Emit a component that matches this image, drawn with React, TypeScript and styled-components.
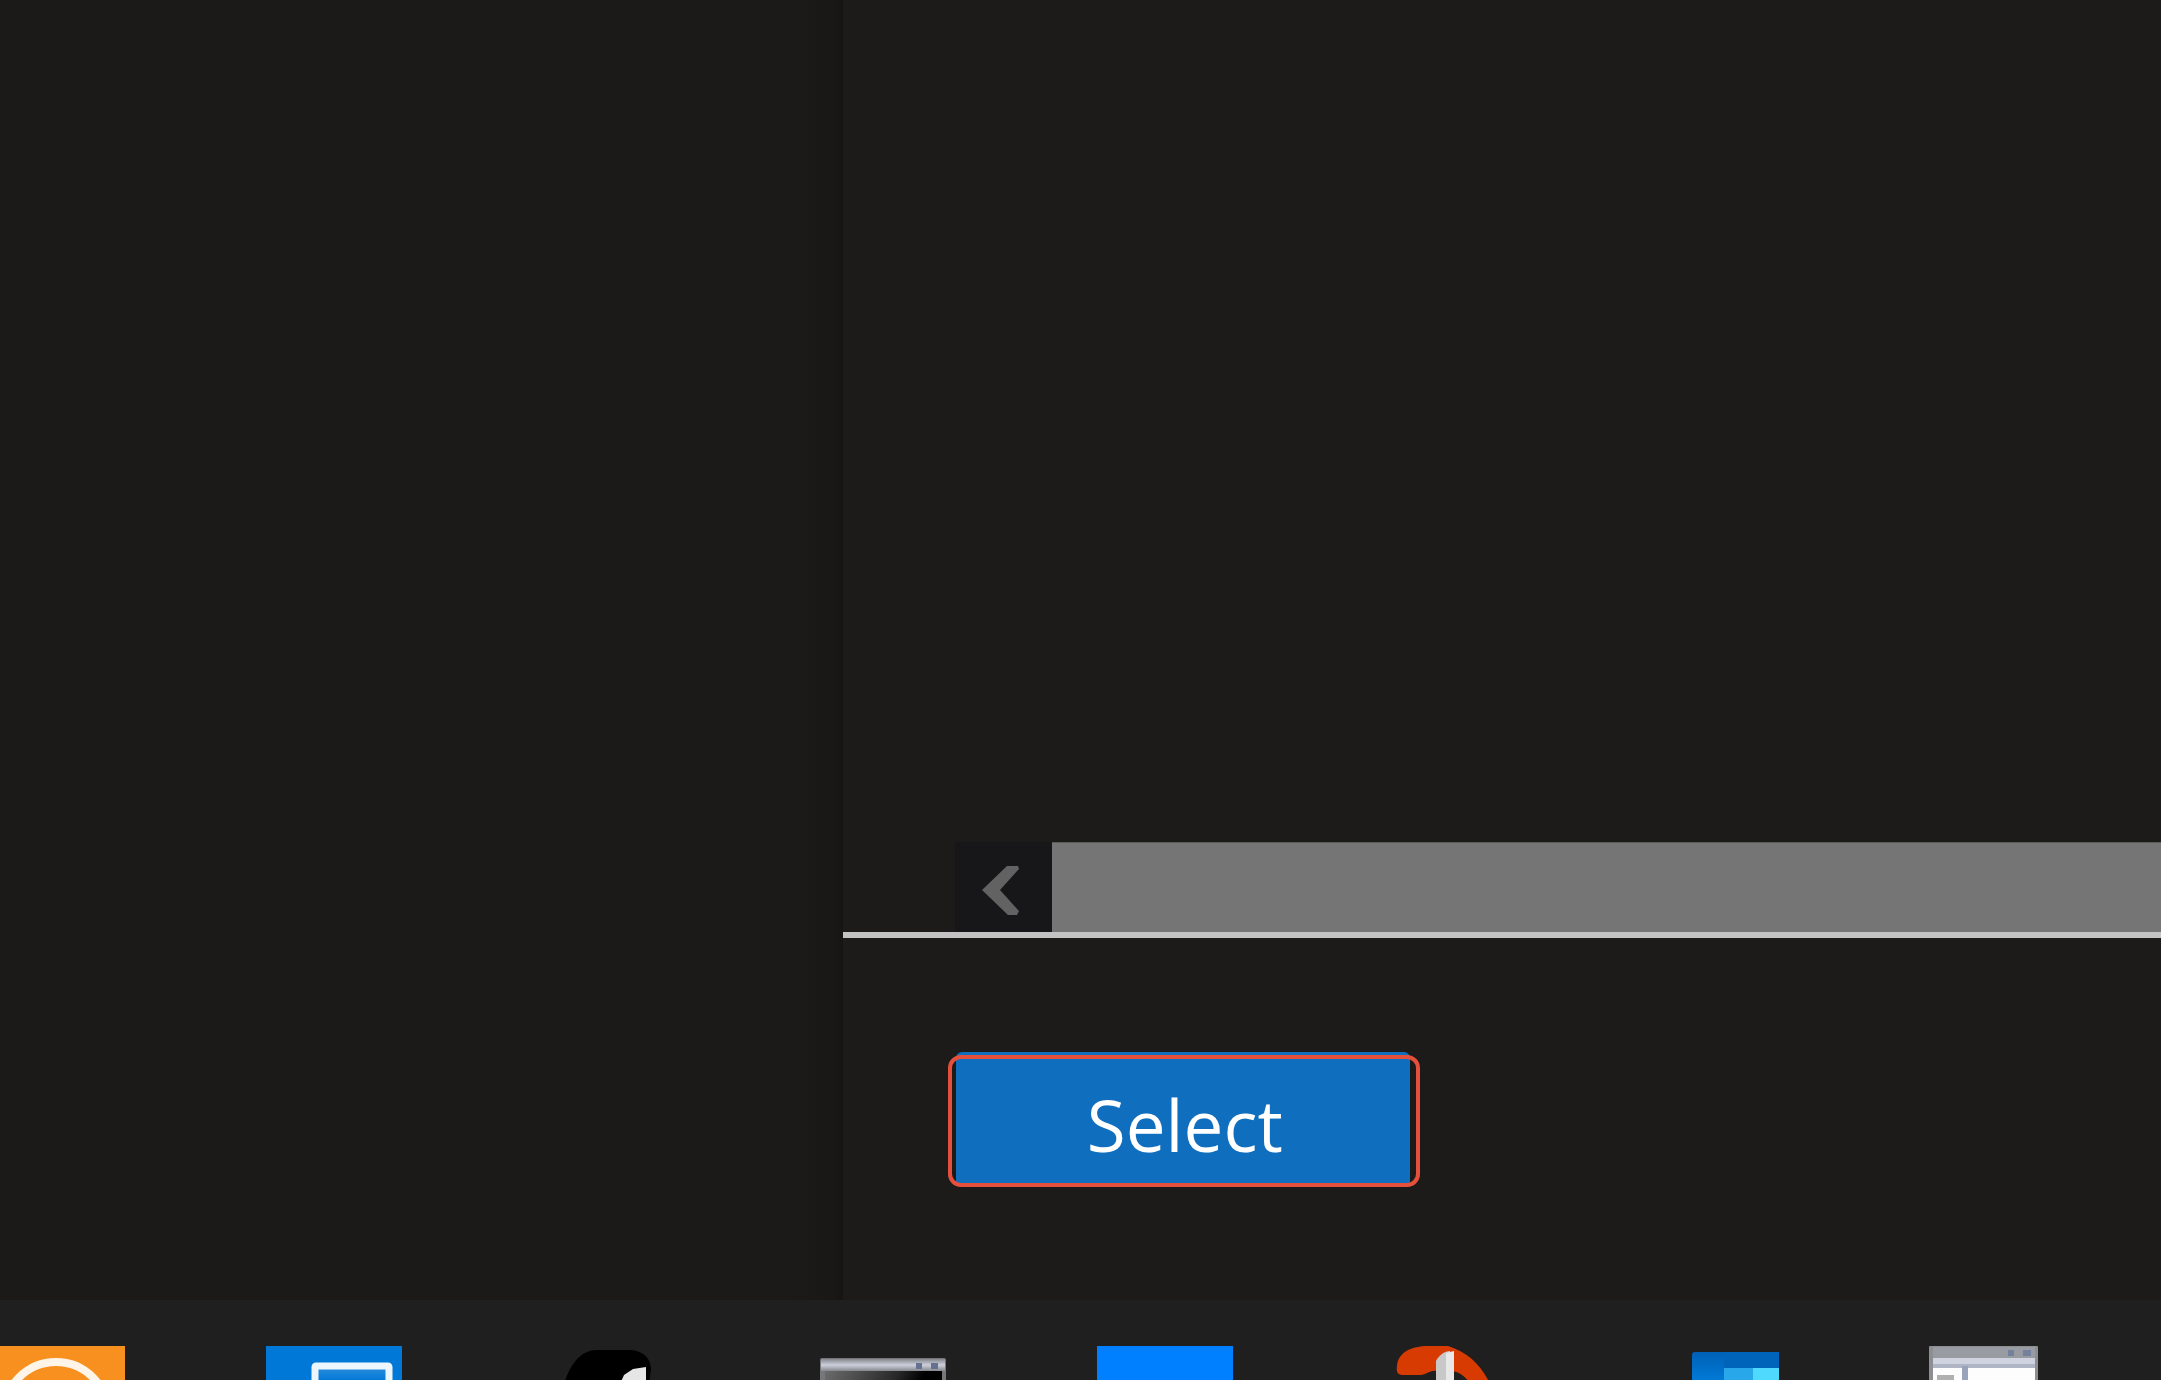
import React from "react";
import styled, { createGlobalStyle } from "styled-components";

const GlobalStyle = createGlobalStyle`
  * { box-sizing: border-box; }
  body {
    margin: 0;
    background: #1b1a19;
    font-family: "Open Sans", "Noto Sans", sans-serif;
  }
`;

const Desktop = styled.div`
  display: flex;
  flex-direction: column;
  height: 100vh;
  overflow: hidden;
`;

const Workspace = styled.main`
  flex: 1;
  display: grid;
  grid-template-columns: 39% 1fr;
  min-height: 0;
`;

const Backdrop = styled.section`
  background: linear-gradient(to left, #161514 0, #191817 12px, #1b1a19 56px);
`;

const Blade = styled.section`
  display: flex;
  flex-direction: column;
  min-width: 0;
  background: #1c1b19;
`;

const Results = styled.div`
  flex: 1;
`;

const ScrollBar = styled.div`
  display: flex;
  height: 90px;
  padding-left: 112px;
`;

const ScrollArrow = styled.button`
  flex: none;
  width: 97px;
  padding: 0;
  border: 0;
  background: #171719;

  svg { display: block; }
`;

const ScrollThumb = styled.div`
  flex: 1;
  background: #757575;
  border-top: 1px solid #5c5c5b;
`;

const Footer = styled.footer`
  padding: 114px 113px 113px;
  border-top: 6px solid #c4c3c3;
`;

const Highlight = styled.div`
  position: relative;
  width: 454px;

  &::after {
    content: "";
    position: absolute;
    inset: 3px -10px 0 -8px;
    border: 4px solid #e5503c;
    border-radius: 13px;
    pointer-events: none;
  }
`;

const PrimaryButton = styled.button`
  display: block;
  width: 100%;
  height: 135px;
  padding: 10px 0 0 4px;
  border: 0;
  border-radius: 6px;
  background: #106ebe;
  color: #fff;
  font-family: inherit;
  font-size: 71px;
  font-weight: 500;
  line-height: 96px;
`;

const TaskBar = styled.nav`
  flex: none;
  display: flex;
  gap: 140px;
  height: 80px;
  margin-left: -11px;
  padding-top: 46px;
  overflow: hidden;
  background: #1f1f1f;
`;

const TaskButton = styled.button`
  flex: none;
  width: 137px;
  height: 137px;
  padding: 0;
  border: 0;
  background: none;

  svg { display: block; }
`;

type App = { name: string; art: React.ReactNode };

const apps: App[] = [
  {
    name: "Search",
    art: (
      <>
        <rect width="136" height="137" fill="#f7901e" />
        <circle cx="67" cy="68" r="52" fill="none" stroke="#fff4e8" strokeWidth="8" />
      </>
    ),
  },
  {
    name: "Remote desktop",
    art: (
      <>
        <defs>
          <linearGradient id="screen" x1="0" y1="0" x2="0" y2="1">
            <stop offset="0" stopColor="#2f8fdd" />
            <stop offset="0.25" stopColor="#0078d7" />
          </linearGradient>
        </defs>
        <rect width="136" height="137" fill="#0078d7" />
        <rect x="49" y="20" width="74" height="60" rx="1" fill="url(#screen)" stroke="#eef6fd" strokeWidth="7" />
      </>
    ),
  },
  {
    name: "Media",
    art: (
      <>
        <path d="M21 38C27 18 38 4 54 4H88C102 5 108 14 108 24L106 38Z" fill="#000" />
        <path d="M77 38L81 29L90 23L103 21V38Z" fill="#e6e6e6" />
      </>
    ),
  },
  {
    name: "Terminal",
    art: (
      <>
        <defs>
          <linearGradient id="titlebar" x1="0" y1="0" x2="0" y2="1">
            <stop offset="0" stopColor="#85878c" />
            <stop offset="0.5" stopColor="#cdd0dc" />
            <stop offset="1" stopColor="#85878c" />
          </linearGradient>
          <linearGradient id="console" x1="0" y1="0" x2="1" y2="0.4">
            <stop offset="0" stopColor="#6c6c6c" />
            <stop offset="0.55" stopColor="#282828" />
            <stop offset="0.75" stopColor="#000" />
          </linearGradient>
        </defs>
        <rect y="12" width="126" height="100" rx="2" fill="#75777b" />
        <rect x="5" y="24" width="117" height="84" fill="url(#console)" />
        <rect x="1" y="13" width="124" height="12" fill="url(#titlebar)" />
        <rect x="96" y="17" width="6" height="6" fill="#64728f" />
        <rect x="111" y="17" width="7" height="6" fill="#64728f" />
      </>
    ),
  },
  { name: "Meetings", art: <rect width="136" height="137" fill="#0080ff" /> },
  {
    name: "Power",
    art: (
      <>
        <path d="M23 20C24 6 38 0 54 0H74C94 6 108 20 116 38H96C92 31 86 26 78 25H62C56 24 53 29 46 29H30C24 29 22 27 23 20Z" fill="#d83b01" />
        <path d="M62 38V15C65 9 71 5 76 5V38Z" fill="#c8c8c8" />
        <path d="M72 7L80 5V38H72Z" fill="#e8e8e8" />
      </>
    ),
  },
  {
    name: "Photos",
    art: (
      <>
        <defs>
          <linearGradient id="tile" x1="0" y1="0" x2="0" y2="1">
            <stop offset="0" stopColor="#0060b5" />
            <stop offset="0.3" stopColor="#0078d4" />
          </linearGradient>
        </defs>
        <rect x="41" y="6" width="87" height="86" rx="3" fill="url(#tile)" />
        <rect x="73" y="6" width="55" height="16" fill="#0065ba" />
        <rect x="73" y="22" width="29" height="30" fill="#28a8ea" />
        <rect x="102" y="22" width="26" height="30" fill="#50d9ff" />
      </>
    ),
  },
  {
    name: "Management console",
    art: (
      <>
        <rect x="1" width="109" height="100" rx="1" fill="#8d8e92" />
        <rect x="5" y="1" width="102" height="11" fill="#999ba3" />
        <rect x="5" y="12" width="102" height="8" fill="#cfd2df" />
        <rect x="5" y="20" width="102" height="80" fill="#fdfdfd" />
        <rect x="5" y="18" width="102" height="4" fill="#b0b5c5" />
        <rect x="34" y="20" width="6" height="80" fill="#98a4bb" />
        <rect x="9" y="29" width="17" height="8" fill="#b0b0b0" />
        <rect x="80" y="4" width="6" height="6" fill="#74819c" />
        <rect x="95" y="4" width="8" height="6" fill="#74819c" />
      </>
    ),
  },
];

export default function App() {
  return (
    <Desktop>
      <GlobalStyle />
      <Workspace>
        <Backdrop />
        <Blade>
          <Results />
          <ScrollBar>
            <ScrollArrow aria-label="Scroll left">
              <svg width="97" height="90" viewBox="0 0 97 90">
                <path d="M52 24H63L64 27L45 48L64 69L62 73H53L27 48Z" fill="#626262" />
              </svg>
            </ScrollArrow>
            <ScrollThumb />
          </ScrollBar>
          <Footer>
            <Highlight>
              <PrimaryButton>Select</PrimaryButton>
            </Highlight>
          </Footer>
        </Blade>
      </Workspace>
      <TaskBar aria-label="Taskbar">
        {apps.map((app) => (
          <TaskButton key={app.name} aria-label={app.name}>
            <svg width="137" height="137" viewBox="0 0 137 137">{app.art}</svg>
          </TaskButton>
        ))}
      </TaskBar>
    </Desktop>
  );
}
